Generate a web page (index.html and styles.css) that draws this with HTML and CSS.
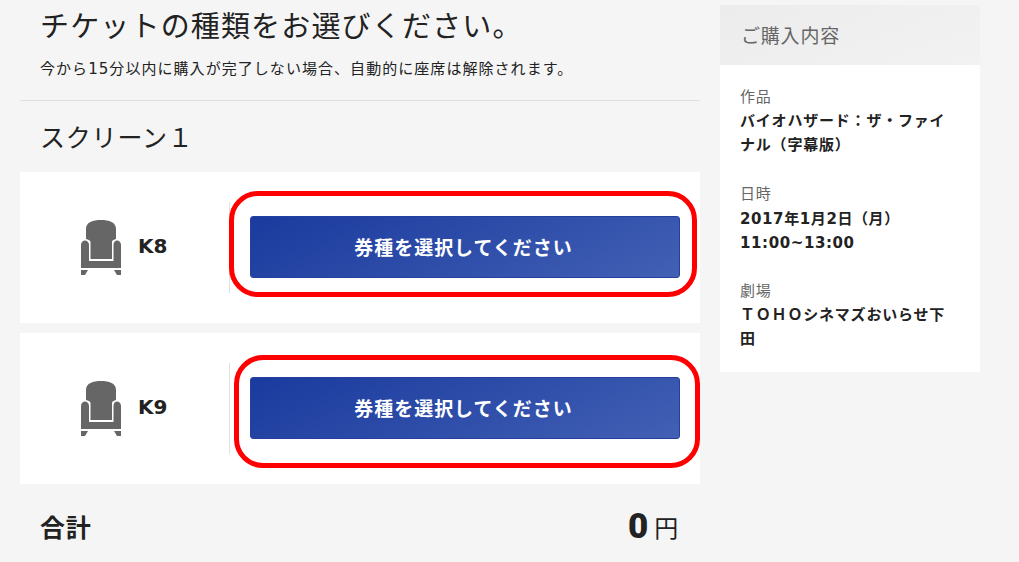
FILE: index.html
```html
<!DOCTYPE html>
<html lang="ja">
<head>
<meta charset="utf-8">
<title>チケットの種類</title>
<link rel="stylesheet" href="styles.css">
</head>
<body>
<div class="page">
  <main class="main">
    <header class="intro">
      <h1 class="title">チケットの種類をお選びください。</h1>
      <p class="note">今から15分以内に購入が完了しない場合、自動的に座席は解除されます。</p>
    </header>
    <h2 class="screen">スクリーン１</h2>
    <section class="row">
      <div class="seat">
        <svg class="chair" viewBox="0 0 40 55" width="40" height="55"><path d="M5 19V9C5 2 12 0 20 0C28 0 35 2 35 9V19C33 20 31 20 31 22V39H9.500V22C9.500 20 7 20 5 19Z"/><path d="M0 25C0 22 2 20.500 4 20.500C6 20.500 8 22 8 25V41H32.500V25C32.500 22 34 20.500 36 20.500C38 20.500 40 22 40 25V48H0Z"/><path d="M0 50H7L4 55H0ZM33 50H40V55H36Z"/></svg>
        <span class="seat-no">K8</span>
      </div>
      <div class="action"><button class="pick" type="button">券種を選択してください</button></div>
      <span class="ring ring-a"></span>
    </section>
    <section class="row">
      <div class="seat">
        <svg class="chair" viewBox="0 0 40 55" width="40" height="55"><path d="M5 19V9C5 2 12 0 20 0C28 0 35 2 35 9V19C33 20 31 20 31 22V39H9.500V22C9.500 20 7 20 5 19Z"/><path d="M0 25C0 22 2 20.500 4 20.500C6 20.500 8 22 8 25V41H32.500V25C32.500 22 34 20.500 36 20.500C38 20.500 40 22 40 25V48H0Z"/><path d="M0 50H7L4 55H0ZM33 50H40V55H36Z"/></svg>
        <span class="seat-no">K9</span>
      </div>
      <div class="action"><button class="pick" type="button">券種を選択してください</button></div>
      <span class="ring ring-b"></span>
    </section>
    <div class="total">
      <span class="total-label">合計</span>
      <span class="total-value"><b>0</b>円</span>
    </div>
  </main>
  <aside class="side">
    <h2 class="side-head">ご購入内容</h2>
    <dl class="side-body">
      <dt>作品</dt>
      <dd>バイオハザード：ザ・ファイナル（字幕版）</dd>
      <dt>日時</dt>
      <dd class="date">2017年1月2日（月）<br>11:00~13:00</dd>
      <dt>劇場</dt>
      <dd>ＴＯＨＯシネマズおいらせ下田</dd>
    </dl>
  </aside>
</div>
</body>
</html>
```
FILE: styles.css
```css
* { box-sizing: border-box; }
html, body { margin: 0; height: 100%; overflow: hidden; }
body {
  background: #f5f5f5;
  color: #222;
  font-family: "Noto Sans CJK JP", "Noto Sans", sans-serif;
  letter-spacing: .05em;
}
.page {
  display: flex;
  gap: 20px;
  padding: 0 20px;
  width: 1000px;
  align-items: flex-start;
}
.main { width: 680px; flex: none; }
.intro {
  height: 101px;
  border-bottom: 1px solid #ddd;
  padding: 4px 20px 0;
}
.title {
  margin: 0;
  font-size: 29px;
  font-weight: 400;
  line-height: 40px;
  letter-spacing: .04em;
}
.note {
  margin: 11px 0 0;
  font-family: "DejaVu Sans", "Noto Sans CJK JP", sans-serif;
  font-size: 15px;
  line-height: 28px;
  letter-spacing: .07em;
}
.screen {
  margin: 0;
  padding: 0 20px;
  height: 71px;
  display: flex;
  align-items: center;
  font-size: 25px;
  font-weight: 400;
  line-height: 1;
}
.row {
  position: relative;
  height: 151px;
  margin-bottom: 10px;
  background: #fff;
  display: flex;
  align-items: center;
}
.seat {
  width: 210px;
  height: 91px;
  border-right: 1px solid #e2e2e2;
  padding-left: 61px;
  display: flex;
  align-items: center;
  gap: 17px;
}
.chair { fill: #666; display: block; margin-top: -1px; }
.seat-no {
  font: 700 20px/1 "DejaVu Sans", sans-serif;
  letter-spacing: 0;
  margin-top: -4px;
}
.action { flex: 1; padding: 0 20px 2px; }
.pick {
  display: block;
  width: 100%;
  height: 62px;
  padding: 0 3px 0 0;
  border: 1px solid #24409f;
  border-radius: 3px;
  background: linear-gradient(155deg, #1a3a9e 0%, #4260b4 100%);
  color: #fff;
  font: 700 19px/1 "Noto Sans CJK JP", sans-serif;
  letter-spacing: .05em;
}
.ring {
  position: absolute;
  border: 5px solid #f00;
  border-radius: 29px;
  pointer-events: none;
}
.ring-a { left: 209px; top: 19px; width: 468px; height: 106px; }
.ring-b { left: 214px; top: 22px; width: 466px; height: 113px; }
.total {
  height: 64px;
  padding: 0 21px 0 20px;
  display: flex;
  justify-content: space-between;
  align-items: center;
}
.total-label { font-size: 25px; font-weight: 700; }
.total-value { font-size: 24px; display: flex; align-items: center; gap: 6px; }
.total-value b { font: 900 35px/1 Roboto, sans-serif; letter-spacing: 0; margin-left: -1px; }
.side {
  width: 260px;
  flex: none;
  margin-top: 5px;
  background: #fff;
}
.side-head {
  margin: 0;
  height: 60px;
  padding: 0 21px;
  background: linear-gradient(160deg, #ececec, #f2f2f2);
  color: #666;
  font-size: 19px;
  font-weight: 400;
  line-height: 59px;
}
.side-body { margin: 0; padding: 19px 20px 22px; font-size: 15px; line-height: 24px; }
.side-body dt { color: #666; }
.side-body dd { margin: 0 0 25px; font-weight: 700; }
.side-body dd:last-child { margin-bottom: 0; }
.side-body .date {
  font-family: "DejaVu Sans", "Noto Sans CJK JP", sans-serif;
  letter-spacing: .04em;
  padding-top: 2px;
  margin-bottom: 23px;
}
```
